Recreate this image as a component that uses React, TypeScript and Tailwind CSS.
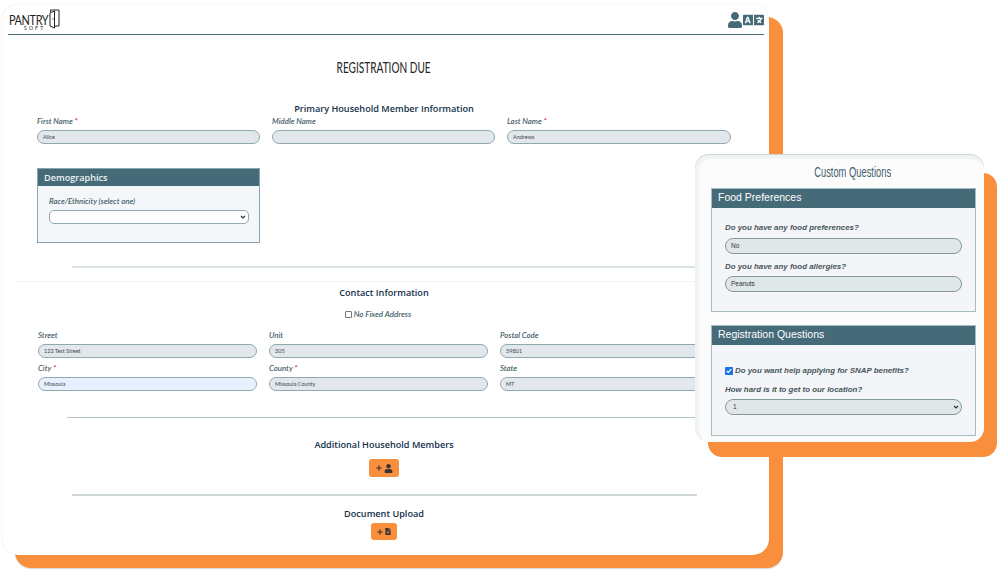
import { FaLanguage, FaPlus, FaUser, FaFileAlt } from "react-icons/fa";

function Field({
  label,
  value,
  required,
  width,
  blue,
}: {
  label: string;
  value: string;
  required?: boolean;
  width: string;
  blue?: boolean;
}) {
  return (
    <div className={width}>
      <div className="h-[13px] text-[7.8px] leading-[13px] font-semibold italic text-[#46606a]">
        {label} {required && <span className="text-[#c0392b]">*</span>}
      </div>
      <div
        className={`mt-[2px] flex h-[14px] items-center rounded-full border border-[#8fa9b0] px-[5px] text-[5.5px] text-[#3c4a50] ${
          blue ? "bg-[#e8f0fe]" : "bg-[#e1e7ea]"
        }`}
      >
        {value}
      </div>
    </div>
  );
}

function Chevron() {
  return (
    <svg width="6" height="4" viewBox="0 0 8 6" fill="none" stroke="#333" strokeWidth="1.8">
      <path d="M1 1.5l3 3 3-3" />
    </svg>
  );
}

function Heading({ children, className }: { children: string; className: string }) {
  return (
    <div className={`pr-[3px] text-center font-['Open_Sans',sans-serif] text-[9.15px] font-semibold text-[#12304a] ${className}`}>
      {children}
    </div>
  );
}

function PanelSection({ title, height, children }: { title: string; height: string; children: React.ReactNode }) {
  return (
    <div className={`border border-[#a5bcc0] bg-[#f3f5f8] ${height}`}>
      <div className="flex h-[19px] items-center bg-[#466b78] px-[6px] pb-[2px] text-[10.5px] text-white">{title}</div>
      {children}
    </div>
  );
}

function PanelInput({ value }: { value: string }) {
  return (
    <div className="mx-[13px] flex h-[16px] items-center rounded-full border border-[#84999d] bg-[#e1e7e8] px-[5px] text-[6.5px] text-[#333]">
      {value}
    </div>
  );
}

function MainCard() {
  return (
    <div className="absolute top-[4px] left-[2px] flex h-[551px] w-[767px] flex-col rounded-[16px] bg-white font-['Lato',sans-serif] shadow-[0_0_1px_rgba(0,0,0,0.2)]">
      <div className="mr-[5px] ml-[6px] flex h-[31px] items-end justify-between border-b-[1.5px] border-[#466b78] pb-[2px]">
        <div className="relative h-[24px] w-[54px]">
          <span className="absolute top-[6px] left-[1px] origin-left scale-x-[0.78] text-[14px] leading-[11px] tracking-[-0.5px] text-[#222]">
            PANTRY
          </span>
          <span className="absolute top-[17px] left-[16px] text-[5px] leading-[6px] tracking-[2.2px] text-[#222]">
            SOFT
          </span>
          <svg className="absolute top-[1px] left-[41px]" width="11" height="20" viewBox="0 0 11 20" fill="none" stroke="#222" strokeWidth="1">
            <path d="M1.5 3V1h8.5v16H6" />
            <path d="M1 4l4.5-2v17L1 17z" />
            <path d="M3.5 10h1.2" />
          </svg>
        </div>
        <div className="mb-[2px] flex items-center text-[#466b78]">
          <FaUser className="h-[16px] w-[16px]" />
          <FaLanguage className="h-[20px] w-[21px]" />
        </div>
      </div>

      <div className="mt-[23px] mb-[1px] flex h-[18px] items-center justify-center pr-[3px]">
        <div className="origin-center scale-x-[0.63] text-[16px] whitespace-nowrap text-[#222]">REGISTRATION DUE</div>
      </div>

      <Heading className="mt-[25px] h-[13px] leading-[13px]">Primary Household Member Information</Heading>
      <div className="ml-[35px] flex gap-[12px]">
        <Field label="First Name" required value="Alice" width="w-[223px]" />
        <Field label="Middle Name" value="" width="w-[223px]" />
        <Field label="Last Name" required value="Andrews" width="w-[224px]" />
      </div>

      <div className="mt-[24px] ml-[35px] h-[75px] w-[223px] border border-[#8aa5ac] bg-[#f3f7f9]">
        <div className="flex h-[17px] items-center bg-[#466b78] px-[6px] font-['Open_Sans',sans-serif] text-[9.15px] font-semibold text-[#eef3f5]">
          Demographics
        </div>
        <div className="mt-[9px] ml-[11px] h-[13px] text-[7.8px] leading-[13px] font-semibold italic text-[#46606a]">
          Race/Ethnicity (select one)
        </div>
        <div className="mt-[2px] ml-[11px] flex h-[14px] w-[200px] items-center justify-end rounded-[5px] border border-[#8fa9b0] bg-white pr-[2px]">
          <Chevron />
        </div>
      </div>

      <div className="mt-[23px] ml-[70px] h-[2px] w-[625px] bg-[#dce3e5]" />
      <div className="mt-[13px] ml-[13px] h-[1px] w-[680px] bg-[#f7f1ec]" />

      <Heading className="mt-[4px] h-[14px] leading-[14px]">Contact Information</Heading>
      <div className="mt-[7px] flex h-[14px] items-center justify-center gap-[2px] pr-[15px] text-[8px] font-semibold italic text-[#46606a]">
        <span className="h-[7px] w-[7px] rounded-[1px] border border-[#767676] bg-white" />
        No Fixed Address
      </div>

      <div className="mt-[8px] ml-[36px] flex gap-[12px]">
        <Field label="Street" value="123 Test Street" width="w-[219px]" />
        <Field label="Unit" value="305" width="w-[219px]" />
        <Field label="Postal Code" value="59801" width="w-[219px]" />
      </div>
      <div className="mt-[4px] ml-[36px] flex gap-[12px]">
        <Field label="City" required blue value="Missoula" width="w-[219px]" />
        <Field label="County" required value="Missoula County" width="w-[219px]" />
        <Field label="State" value="MT" width="w-[219px]" />
      </div>

      <div className="mt-[26px] ml-[65px] h-[1px] w-[630px] bg-[#b5c5c9]" />

      <Heading className="mt-[20px] h-[14px] leading-[14px]">Additional Household Members</Heading>
      <button className="mt-[7px] ml-[367px] flex h-[18px] w-[30px] items-center justify-center gap-[2px] rounded-[3px] bg-[#f98f3d] text-[#333]">
        <FaPlus className="h-[6px] w-[6px]" />
        <FaUser className="h-[9px] w-[9px]" />
      </button>

      <div className="mt-[17px] ml-[70px] h-[2px] w-[625px] bg-[#cfd8da]" />

      <Heading className="mt-[11px] mb-[-1px] h-[14px] leading-[14px]">Document Upload</Heading>
      <button className="mt-[3px] ml-[369px] flex h-[17px] w-[26px] items-center justify-center gap-[2px] rounded-[3px] bg-[#f98f3d] text-[#333]">
        <FaPlus className="h-[6px] w-[6px]" />
        <FaFileAlt className="h-[7px] w-[6px]" />
      </button>
    </div>
  );
}

function QuestionsCard() {
  return (
    <div className="absolute top-[155px] left-[695px] flex h-[287px] w-[289px] flex-col gap-[13px] rounded-[14px] border-t-[4px] border-l-[4px] border-[#eef3f4] bg-[#fcfcfd] pr-[8px] pl-[12px] font-['Liberation_Sans',sans-serif] shadow-[0_-1px_0_#cdd4d7]">
      <div className="-mb-[13px] flex h-[29px] items-center justify-center pb-[2px] pl-[19px]">
        <div className="origin-center scale-x-[0.645] text-[14.5px] whitespace-nowrap text-[#3f5f6b]">Custom Questions</div>
      </div>
      <PanelSection title="Food Preferences" height="h-[124px]">
        <div className="mt-[13px] ml-[13px] h-[13px] text-[7.9px] leading-[13px] font-bold italic text-[#46565c]">
          Do you have any food preferences?
        </div>
        <div className="mt-[4px]">
          <PanelInput value="No" />
        </div>
        <div className="mt-[6px] ml-[13px] h-[13px] text-[7.9px] leading-[13px] font-bold italic text-[#46565c]">
          Do you have any food allergies?
        </div>
        <div className="mt-[3px]">
          <PanelInput value="Peanuts" />
        </div>
      </PanelSection>
      <PanelSection title="Registration Questions" height="h-[111px]">
        <div className="mt-[19px] ml-[13px] flex h-[13px] items-center gap-[2px] text-[7.9px] font-bold italic text-[#46565c]">
          <span className="flex h-[8px] w-[8px] items-center justify-center rounded-[1px] bg-[#1a73e8]">
            <svg width="6" height="6" viewBox="0 0 8 8" fill="none" stroke="#fff" strokeWidth="1.6">
              <path d="M1 4l2 2 4-4.5" />
            </svg>
          </span>
          Do you want help applying for SNAP benefits?
        </div>
        <div className="mt-[6px] ml-[13px] h-[13px] text-[7.9px] leading-[13px] font-bold italic text-[#46565c]">
          How hard is it to get to our location?
        </div>
        <div className="mx-[13px] mt-[3px] flex h-[16px] items-center justify-between rounded-full border border-[#84999d] bg-[#e1e7e8] pr-[2px] pl-[7px] text-[6.5px] text-[#333]">
          1
          <Chevron />
        </div>
      </PanelSection>
    </div>
  );
}

export default function App() {
  return (
    <div className="relative h-[571px] w-[1000px] overflow-hidden bg-white">
      <div className="absolute top-[17px] left-[15px] h-[551px] w-[768px] rounded-[16px] bg-[#f98f3d] shadow-[0_1px_1px_rgba(0,0,0,0.15)]" />
      <MainCard />
      <div className="absolute top-[173px] left-[708px] h-[284px] w-[289px] rounded-[14px] bg-[#f98f3d]" />
      <QuestionsCard />
    </div>
  );
}
